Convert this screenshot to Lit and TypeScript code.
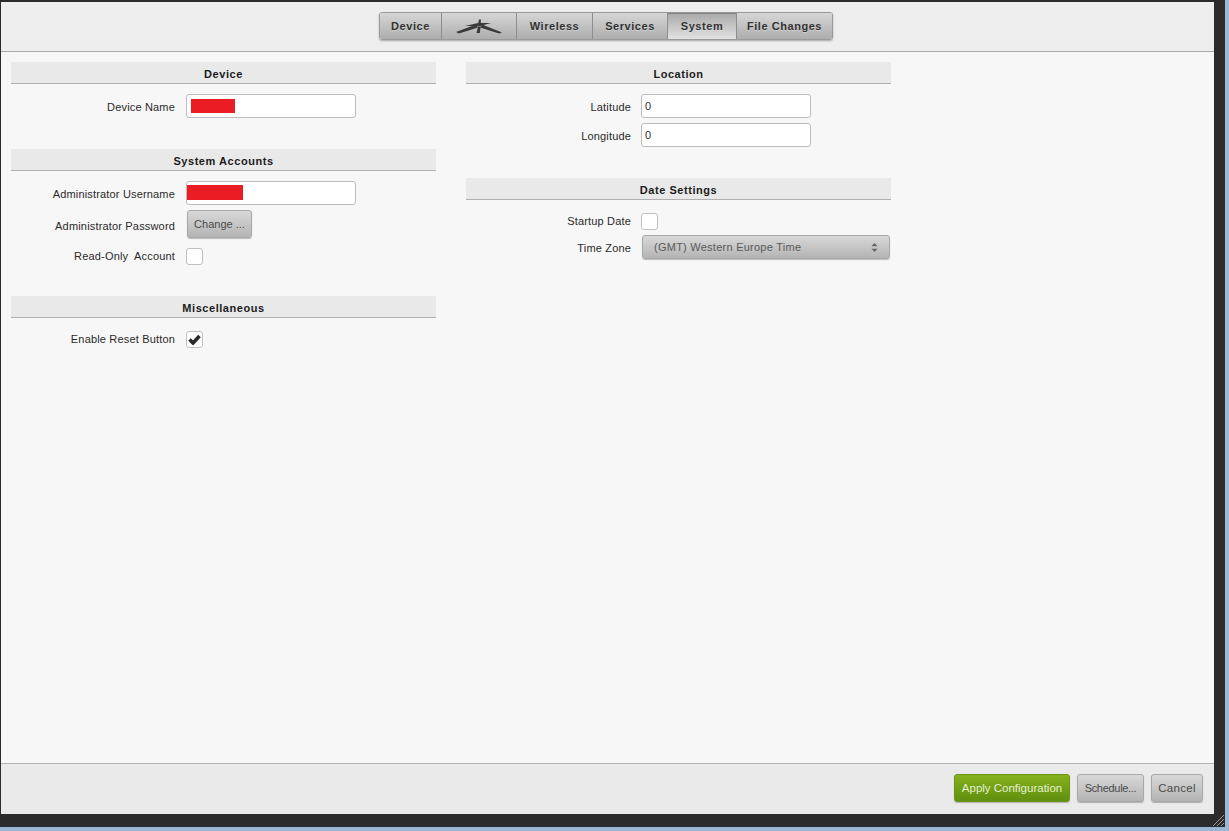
import { LitElement, html, css } from "lit";
import { customElement } from "lit/decorators.js";

@customElement("app-root")
export class AppRoot extends LitElement {
  static styles = css`
    :host { display: block; width: 1229px; height: 831px; overflow: hidden; background: #9db6d3; font-family: "Liberation Sans", Arial, sans-serif; font-size: 11px; color: #222; }
    * { box-sizing: border-box; }
    .frame { position: relative; width: 1225px; height: 827px; background: #2b2b2b; padding: 2px 11px 13px 1px; }
    .panel { height: 100%; background: #f7f7f7; display: flex; flex-direction: column; }
    .top { height: 50px; flex: none; background: #eeeeee; border-bottom: 1px solid #a8a8a8; padding: 10px 0 0 378px; }
    .tabs { display: inline-flex; height: 28px; border-radius: 3px; border: 1px solid #9a9a9a; box-shadow: 0 1px 2px rgba(0,0,0,.3); overflow: hidden; }
    .tab { display: flex; align-items: center; justify-content: center; background: linear-gradient(#d6d6d6, #adadad); border-right: 1px solid #8d8d8d; font-weight: bold; letter-spacing: .55px; color: #333; text-shadow: 0 1px 0 rgba(255,255,255,.3); }
    .tab:last-child { border-right: 0; }
    .tab.on { background: linear-gradient(#a8a8a8, #e2e2e2); box-shadow: inset 0 1px 0 #808080; }
    .content { flex: 1; display: flex; gap: 30px; padding: 10px 0 0 10px; }
    .col { width: 425px; }
    .head { height: 22px; background: #e9e9e9; border-bottom: 1px solid #b0b0b0; text-align: center; font-weight: bold; line-height: 24px; letter-spacing: .55px; color: #1c1c1c; }
    .rows { padding: 10px 0 31px; display: flex; flex-direction: column; gap: 5px; }
    .rows.tall { padding-top: 13px; }
    .row { display: flex; align-items: center; gap: 11px; }
    .col.right .row { gap: 10px; }
    .col.right .row label { width: 165px; }
    .row.sp { margin-top: 5px; }
    .row label { width: 164px; text-align: right; letter-spacing: .17px; color: #2a2a2a; padding-top: 1px; white-space: pre; }
    .row.btn label { padding-top: 4px; }
    .row.chk label { padding-top: 0; margin-top: -1px; }
    .input { width: 170px; height: 24px; background: #fff; border: 1px solid #bcbcbc; border-radius: 3px; padding: 0 3px; line-height: 22px; letter-spacing: .2px; color: #333; display: flex; align-items: center; }
    .red { background: #ea1c24; }
    .r1 { width: 44px; height: 14px; margin-left: 1px; }
    .r2 { width: 56px; height: 15px; margin-left: -3px; margin-top: -1px; }
    .check { width: 17px; height: 17px; background: #fff; border: 1px solid #c0c0c0; border-radius: 3px; display: flex; align-items: center; justify-content: center; }
    .button { height: 28px; display: flex; align-items: center; justify-content: center; background: linear-gradient(#d8d8d8, #b4b4b4); border: 1px solid #a8a8a8; border-radius: 3px; box-shadow: 0 1px 1px rgba(0,0,0,.25); font-size: 11.5px; letter-spacing: .3px; color: #4a4a4a; }
    .change { width: 65px; margin-left: 1px; padding-bottom: 1px; font-size: 11px; letter-spacing: 0; }
    .select { width: 248px; height: 24px; margin-left: 1px; padding: 0 11px; justify-content: space-between; letter-spacing: .25px; font-size: 11px; color: #5a5a5a; }
    .select svg { display: block; }
    .bottom { height: 51px; flex: none; background: #eaeaea; border-top: 1px solid #b4b4b4; display: flex; justify-content: flex-end; gap: 7px; padding: 10px 11px 0 0; }
    .apply { width: 116px; background: linear-gradient(#86b11e, #5f8f0e); border-color: #6b9418; color: #e6f0d0; letter-spacing: 0; }
    .sched { width: 67px; font-size: 11px; letter-spacing: -.3px; }
    .cancel { width: 52px; }
    .grip { position: absolute; right: 0; bottom: 1px; display: block; }
  `;

  private check(on = false) {
    return html`<span class="check">${on ? html`<svg width="13" height="11" viewBox="0 0 13 11"><path d="M1.5 5.5 5 9l6.5-7" fill="none" stroke="#2a2a2a" stroke-width="3.6"/></svg>` : ""}</span>`;
  }

  render() {
    return html`
      <div class="frame">
        <div class="panel">
          <div class="top">
            <div class="tabs">
              <div class="tab" style="width:62px">Device</div>
              <div class="tab" style="width:75px">
                <svg width="48" height="16" viewBox="0 0 48 16"><g fill="#3a3a3a"><path d="M1 14 21 6.5 23 9.5 4 15.5Z"/><path d="M47 14.5 27 6.5 25 9.5 44 15.5Z"/><path d="M10 8 23 5 23 8ZM36 5 25 5 25 8Z"/><path d="M26 1.5 24 1.5 22.5 8 25.5 8Z"/><path d="M21.5 15 25 15 25.5 8.5 23 8.5Z"/></g></svg>
              </div>
              <div class="tab" style="width:76px">Wireless</div>
              <div class="tab" style="width:75px">Services</div>
              <div class="tab on" style="width:69px">System</div>
              <div class="tab" style="width:95px">File Changes</div>
            </div>
          </div>
          <div class="content">
            <div class="col">
              <div class="head">Device</div>
              <div class="rows">
                <div class="row"><label>Device Name</label><div class="input"><span class="red r1"></span></div></div>
              </div>
              <div class="head">System Accounts</div>
              <div class="rows">
                <div class="row"><label>Administrator Username</label><div class="input"><span class="red r2"></span></div></div>
                <div class="row btn"><label>Administrator Password</label><div class="button change">Change ...</div></div>
                <div class="row sp chk"><label>Read-Only  Account</label>${this.check()}</div>
              </div>
              <div class="head">Miscellaneous</div>
              <div class="rows tall">
                <div class="row chk"><label>Enable Reset Button</label>${this.check(true)}</div>
              </div>
            </div>
            <div class="col right">
              <div class="head">Location</div>
              <div class="rows">
                <div class="row"><label>Latitude</label><div class="input">0</div></div>
                <div class="row"><label>Longitude</label><div class="input">0</div></div>
              </div>
              <div class="head">Date Settings</div>
              <div class="rows tall">
                <div class="row chk"><label>Startup Date</label>${this.check()}</div>
                <div class="row"><label>Time Zone</label>
                  <div class="button select"><span>(GMT) Western Europe Time</span>
                    <svg width="7" height="9" viewBox="0 0 7 9"><path d="M3.5 0 6.5 3.2H.5ZM3.5 9 .5 5.8H6.5Z" fill="#666"/></svg>
                  </div>
                </div>
              </div>
            </div>
          </div>
          <div class="bottom">
            <div class="button apply">Apply Configuration</div>
            <div class="button sched">Schedule...</div>
            <div class="button cancel">Cancel</div>
          </div>
        </div>
        <svg class="grip" width="14" height="12" viewBox="0 0 14 12"><path d="M2 12 13 1M6 12 13 5M10 12 13 9" stroke="#9a9a9a" fill="none"/></svg>
      </div>
    `;
  }
}
